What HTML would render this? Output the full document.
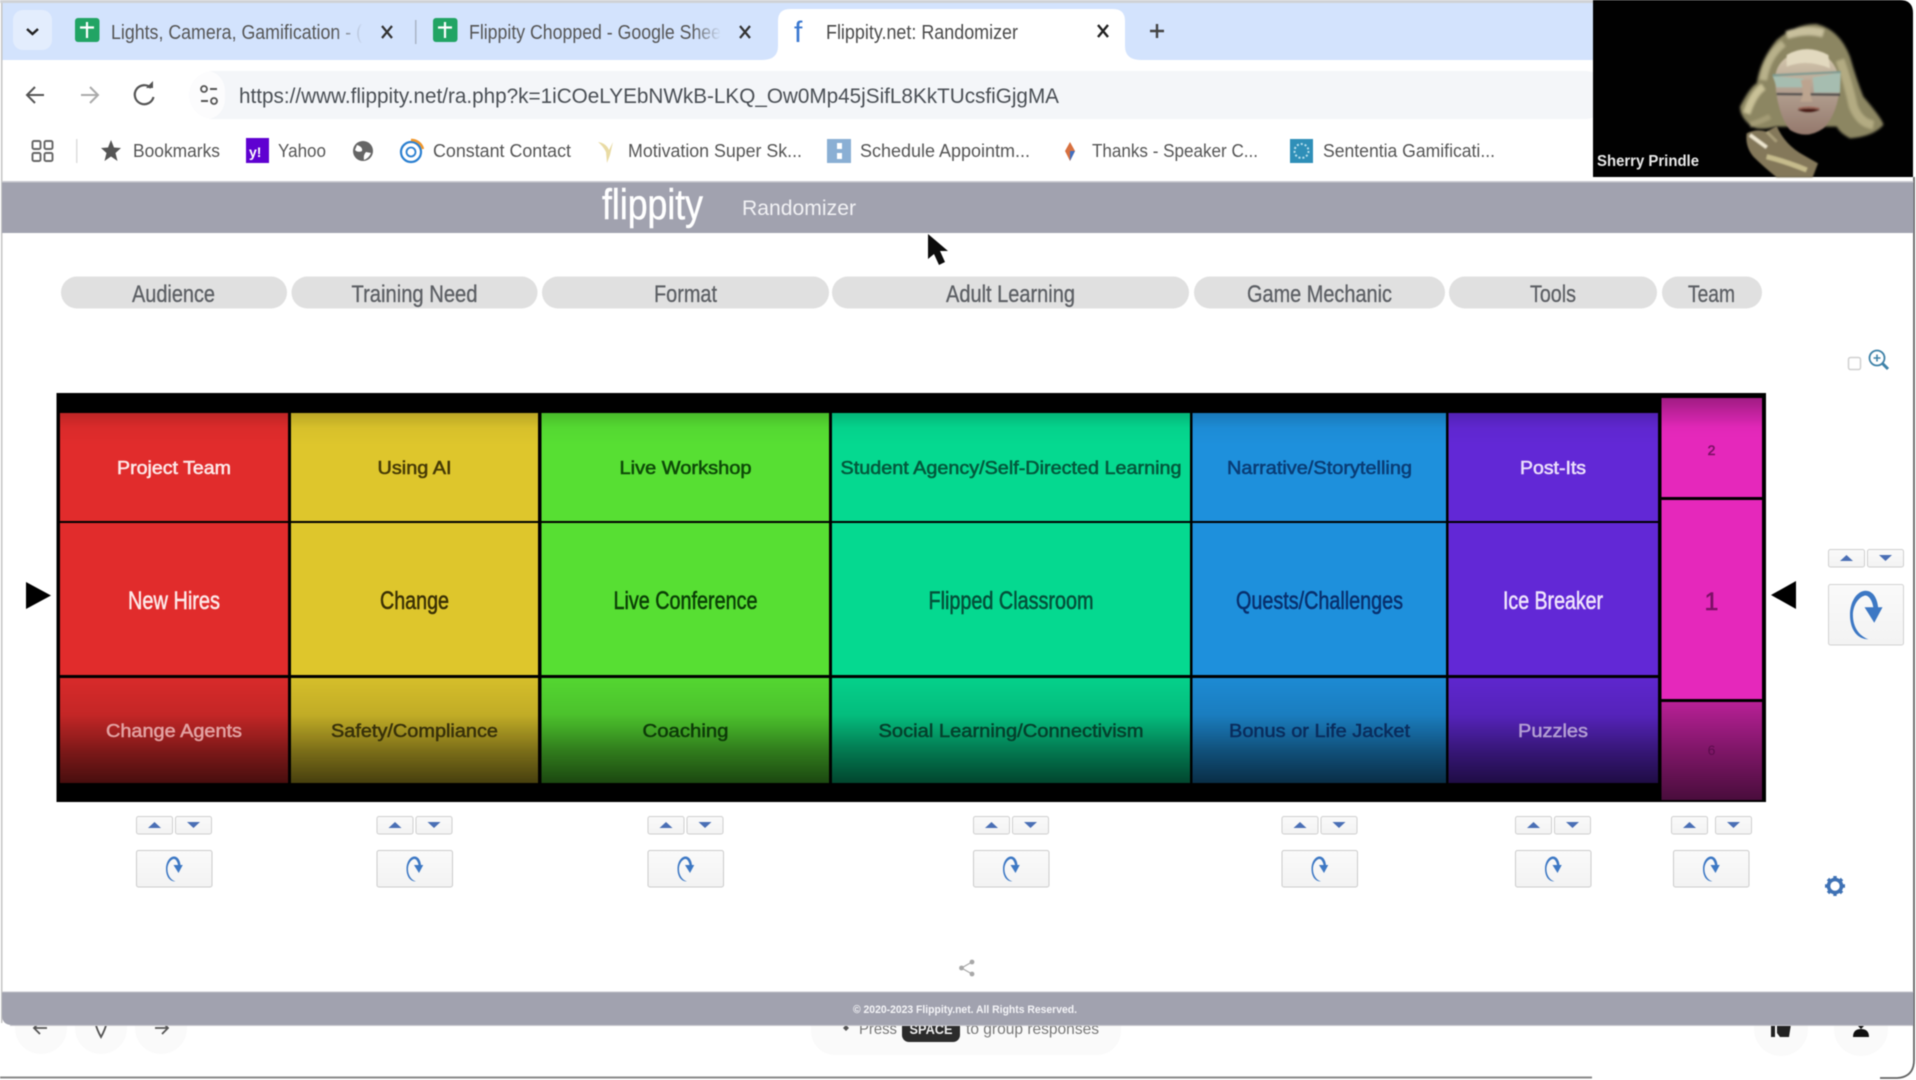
<!DOCTYPE html>
<html><head><meta charset="utf-8"><title>Flippity.net: Randomizer</title>
<style>
html,body{margin:0;padding:0;width:1916px;height:1080px;overflow:hidden;background:#fff}
svg{display:block;filter:blur(.6px)}
text{font-family:"Liberation Sans",sans-serif}
</style></head><body>
<svg xmlns="http://www.w3.org/2000/svg" width="1916" height="1080" viewBox="0 0 1916 1080">
<defs>
<linearGradient id="r1" x1="0" y1="0" x2="0" y2="1"><stop offset="0" stop-color="#000" stop-opacity=".16"/><stop offset=".14" stop-color="#000" stop-opacity=".03"/><stop offset=".3" stop-color="#000" stop-opacity="0"/></linearGradient>
<linearGradient id="r3" x1="0" y1="0" x2="0" y2="1"><stop offset="0" stop-color="#000" stop-opacity=".04"/><stop offset=".35" stop-color="#000" stop-opacity=".13"/><stop offset=".7" stop-color="#000" stop-opacity=".45"/><stop offset="1" stop-color="#000" stop-opacity=".68"/></linearGradient>
<linearGradient id="p1" x1="0" y1="0" x2="0" y2="1"><stop offset="0" stop-color="#000" stop-opacity=".3"/><stop offset=".3" stop-color="#000" stop-opacity=".02"/><stop offset=".4" stop-color="#000" stop-opacity="0"/></linearGradient>
<linearGradient id="p3" x1="0" y1="0" x2="0" y2="1"><stop offset="0" stop-color="#000" stop-opacity=".2"/><stop offset=".5" stop-color="#000" stop-opacity=".45"/><stop offset="1" stop-color="#000" stop-opacity=".68"/></linearGradient>
<linearGradient id="fd" x1="0" y1="0" x2="1" y2="0"><stop offset="0" stop-color="#d3e3fd" stop-opacity="0"/><stop offset="1" stop-color="#d3e3fd"/></linearGradient>
<linearGradient id="btn" x1="0" y1="0" x2="0" y2="1"><stop offset="0" stop-color="#fafafa"/><stop offset="1" stop-color="#f3f3f3"/></linearGradient>
<linearGradient id="face" x1="0" y1="0" x2="0" y2="1"><stop offset="0" stop-color="#d8ccb0"/><stop offset=".45" stop-color="#b4a292"/><stop offset="1" stop-color="#94786c"/></linearGradient>
<filter id="b3" x="-20%" y="-20%" width="140%" height="140%"><feGaussianBlur stdDeviation="7"/></filter>
<filter id="b2" x="-20%" y="-20%" width="140%" height="140%"><feGaussianBlur stdDeviation="4"/></filter>
<filter id="b1" x="-20%" y="-20%" width="140%" height="140%"><feGaussianBlur stdDeviation="2.500"/></filter>
<symbol id="spin" viewBox="0 0 34 50" overflow="visible">
<path fill="#3d78c4" d="M19 50C6 50 0 38 0 25C0 10 8 0 16 0C24 0 28 8 29 17L33.500 17L25 33L15 17L24 17C23 10 19 4 15 5C8 7 3 16 3 25C3 38 10 47 19 50Z"/>
</symbol>
<g id="ud">
<rect x=".5" y=".5" width="36" height="17.500" rx="2" fill="url(#btn)" stroke="#cfcfcf"/>
<path d="M12 12L18.500 6L25 12Z" fill="#4a6fb5"/>
<rect x="39.500" y=".5" width="36" height="17.500" rx="2" fill="url(#btn)" stroke="#cfcfcf"/>
<path d="M51 6L64 6L57.500 12Z" fill="#4a6fb5"/>
</g>
<g id="sp">
<rect x=".5" y=".5" width="75.500" height="36.500" rx="2" fill="url(#btn)" stroke="#cbcbcb"/>
<use href="#spin" x="30" y="6.500" width="17" height="25"/>
</g>
</defs>

<rect width="1916" height="1080" fill="#fff"/>

<!-- tab strip -->
<rect x="2" y="0" width="1600" height="60" fill="#d3e3fd"/>
<rect x="0" y="0" width="1600" height="3" fill="#cfd2d6"/>
<rect x="13" y="10" width="39" height="40" rx="10" fill="#e3edfd"/>
<path d="M27 29L32.500 34L38 29" fill="none" stroke="#222" stroke-width="2.400"/>
<!-- tab 1 -->
<rect x="75" y="18" width="24.500" height="24" rx="3" fill="#21a464"/>
<path d="M87 22V38M80 27.500H94" stroke="#fff" stroke-width="2.200"/>
<text x="111" y="39" font-size="20" fill="#555" textLength="251" lengthAdjust="spacingAndGlyphs">Lights, Camera, Gamification - (</text>
<rect x="335" y="15" width="28" height="32" fill="url(#fd)"/>
<path d="M382 26L392 38M392 26L382 38" stroke="#333" stroke-width="2.200"/>
<rect x="415" y="20" width="1.500" height="24" fill="#a9b4c6"/>
<!-- tab 2 -->
<rect x="433" y="18" width="24.500" height="24" rx="3" fill="#21a464"/>
<path d="M445 22V38M438 27.500H452" stroke="#fff" stroke-width="2.200"/>
<text x="469" y="39" font-size="20" fill="#555" textLength="252" lengthAdjust="spacingAndGlyphs">Flippity Chopped - Google Shee</text>
<rect x="693" y="15" width="28" height="32" fill="url(#fd)"/>
<path d="M740 26L750 38M750 26L740 38" stroke="#333" stroke-width="2.200"/>
<!-- active tab -->
<path d="M762 60Q778 60 778 46V21Q778 9 790 9H1113Q1125 9 1125 21V46Q1125 60 1141 60Z" fill="#fff"/>
<text x="794" y="42" font-size="30" fill="#3a78d0">f</text>
<text x="826" y="39" font-size="20" fill="#4a4a4a" textLength="192" lengthAdjust="spacingAndGlyphs">Flippity.net: Randomizer</text>
<path d="M1098 25L1108 37M1108 25L1098 37" stroke="#222" stroke-width="2.400"/>
<path d="M1157 24V38M1150 31H1164" stroke="#444" stroke-width="2.400"/>

<!-- toolbar -->
<rect x="2" y="60" width="1600" height="122" fill="#fff"/>
<rect x="189" y="71" width="1420" height="48" rx="24" fill="#f4f6f9"/>
<rect x="189" y="71" width="36" height="48" rx="20" fill="#fff" opacity=".7"/>
<path d="M44 95H28M35 87L27 95L35 103" fill="none" stroke="#555" stroke-width="2"/>
<path d="M81 95H97M90 87L98 95L90 103" fill="none" stroke="#aaa" stroke-width="2"/>
<path d="M151 88A9.500 9.500 0 1 0 153.500 97" fill="none" stroke="#555" stroke-width="2.200"/>
<path d="M146 88H153V81Z" fill="#555"/>
<circle cx="204" cy="89" r="3" fill="none" stroke="#555" stroke-width="1.800"/><path d="M210 89H217M201 101H208" stroke="#555" stroke-width="2"/><circle cx="214" cy="101" r="3" fill="none" stroke="#555" stroke-width="1.800"/>
<text x="239" y="103" font-size="21" fill="#4a4f55" textLength="820" lengthAdjust="spacingAndGlyphs">https://www.flippity.net/ra.php?k=1iCOeLYEbNWkB-LKQ_Ow0Mp45jSifL8KkTUcsfiGjgMA</text>

<!-- bookmarks -->
<g fill="none" stroke="#666" stroke-width="1.900"><rect x="32.500" y="141" width="8" height="8" rx="1.500"/><rect x="44.500" y="141" width="8" height="8" rx="1.500"/><rect x="32.500" y="153" width="8" height="8" rx="1.500"/><rect x="44.500" y="153" width="8" height="8" rx="1.500"/></g>
<rect x="76" y="139" width="1.500" height="24" fill="#ddd"/>
<path d="M111 140L114 147.500L121 148L115.500 153L117.500 161L111 156.500L104.500 161L106.500 153L101 148L108 147.500Z" fill="#555"/>
<text x="133" y="157" font-size="18" fill="#555" textLength="87" lengthAdjust="spacingAndGlyphs">Bookmarks</text>
<rect x="246" y="138" width="23" height="25" fill="#5f01d1"/>
<text x="249" y="157" font-size="14" font-weight="bold" fill="#fff">y!</text>
<text x="278" y="157" font-size="18" fill="#555" textLength="48" lengthAdjust="spacingAndGlyphs">Yahoo</text>
<circle cx="363" cy="151" r="10" fill="#666"/><path d="M357 145Q363 147 362 151Q358 153 355 150ZM366 152L371 153Q369 158 364 160Q363 155 366 152Z" fill="#fff"/>
<circle cx="411" cy="152" r="10" fill="none" stroke="#2a7fd0" stroke-width="2.200"/><circle cx="411" cy="152" r="4.500" fill="none" stroke="#2a7fd0" stroke-width="1.800"/><path d="M411 140A12 12 0 0 1 423 149" fill="none" stroke="#f0962a" stroke-width="2.400"/>
<text x="433" y="157" font-size="18" fill="#555" textLength="138" lengthAdjust="spacingAndGlyphs">Constant Contact</text>
<path d="M598 142Q606 143 609 150L613 142L610 155L607 163L606 152Q603 146 598 142Z" fill="#e9dba4"/>
<text x="628" y="157" font-size="18" fill="#555" textLength="174" lengthAdjust="spacingAndGlyphs">Motivation Super Sk...</text>
<rect x="827" y="139" width="24" height="24" fill="#8aafd4"/><rect x="837" y="143" width="5" height="6" fill="#fff"/><rect x="837" y="153" width="5" height="6" fill="#fff"/>
<text x="860" y="157" font-size="18" fill="#555" textLength="170" lengthAdjust="spacingAndGlyphs">Schedule Appointm...</text>
<path d="M1070 142L1075 151L1070 161L1065 151Z" fill="#d8703f"/><path d="M1070 151L1075 151L1070 161Z" fill="#3f6fc2"/>
<text x="1092" y="157" font-size="18" fill="#555" textLength="166" lengthAdjust="spacingAndGlyphs">Thanks - Speaker C...</text>
<rect x="1290" y="139" width="23" height="24" fill="#2f8fb8"/><circle cx="1301.500" cy="151" r="7" fill="none" stroke="#b8e0ee" stroke-width="2" stroke-dasharray="2 2"/>
<text x="1323" y="157" font-size="18" fill="#555" textLength="172" lengthAdjust="spacingAndGlyphs">Sententia Gamificati...</text>

<!-- video -->
<path d="M1593 0H1900Q1913 0 1913 13V177H1593Z" fill="#010101"/>
<g transform="translate(1590 0) scale(.33333)">
<g filter="url(#b2)">
<path d="M450 320Q480 260 500 250Q510 180 560 120Q620 70 680 72Q750 90 780 170Q800 240 820 290Q880 360 880 375Q850 410 780 415Q750 400 740 380L560 380Q500 395 480 375Q450 350 450 320Z" fill="#8c8662"/>
<path d="M470 340Q490 280 520 260" stroke="#c9c197" stroke-width="22" fill="none"/>
<path d="M520 240Q530 170 580 130" stroke="#b8b18a" stroke-width="22" fill="none"/>
<path d="M590 105Q650 85 700 100" stroke="#c8c09c" stroke-width="24" fill="none"/>
<path d="M750 180Q775 250 790 320Q810 370 850 375" stroke="#b3ab82" stroke-width="26" fill="none"/>
<path d="M480 375Q510 365 540 350" stroke="#a49c76" stroke-width="16" fill="none"/>
</g>
<g filter="url(#b1)">
<path d="M555 235Q560 165 650 150Q740 160 750 250Q745 340 700 385Q650 420 600 390Q560 340 555 235Z" fill="url(#face)"/>
<path d="M590 165Q650 130 715 165L720 205Q650 175 590 200Z" fill="#e2d9bf"/>
<path d="M548 228L640 236L640 262L560 262ZM668 232L752 218L750 278L672 278Z" fill="#a6bdb0"/>
<path d="M548 226L752 216" stroke="#7f9a90" stroke-width="7" fill="none"/>
<path d="M560 282L750 284" stroke="#4a4a48" stroke-width="7" fill="none"/>
<path d="M632 240Q645 285 630 305L668 305Q656 280 664 240Z" fill="#bca48f"/>
<path d="M622 330Q655 320 690 330Q655 345 622 330Z" fill="#4c1e18"/>
<path d="M625 326Q655 318 688 326" stroke="#9a5a4c" stroke-width="4" fill="none"/>
</g>
<g filter="url(#b1)">
<path d="M470 400Q500 385 530 395L560 378Q585 435 640 465L684 490L668 532L560 532Q520 500 490 470Q465 440 470 400Z" fill="#84785a"/>
<path d="M480 405L530 442" stroke="#eee6cf" stroke-width="11"/>
<path d="M530 470Q590 485 650 510" stroke="#c6bb8c" stroke-width="15" fill="none"/>
<path d="M530 395L560 425" stroke="#a89c78" stroke-width="9"/>
</g>
</g>
<text x="1597" y="166" font-size="16" font-weight="bold" fill="#e8e8e8" textLength="102" lengthAdjust="spacingAndGlyphs">Sherry Prindle</text>

<!-- page edges -->
<rect x="1" y="3" width="1.500" height="1020" fill="#c4c4c4"/>
<path d="M1914 177V1060Q1914 1077 1897 1078H1880" fill="none" stroke="#666" stroke-width="1.800"/>
<rect x="0" y="1076.500" width="1592" height="2" fill="#8a8a8a"/>

<!-- header -->
<rect x="2" y="182" width="1911.500" height="51" fill="#a1a2af"/>
<rect x="2" y="181" width="1911.500" height="1.500" fill="#c9c9cf"/>
<text x="602" y="219" font-size="43" fill="#fff" stroke="#fff" stroke-width=".5" textLength="101" lengthAdjust="spacingAndGlyphs">flippity</text>
<text x="742" y="215" font-size="21" fill="#f1f1f4" textLength="114" lengthAdjust="spacingAndGlyphs">Randomizer</text>

<!-- pills -->
<g fill="#e0e0e0">
<rect x="61" y="276.500" width="226" height="32" rx="16"/>
<rect x="291.500" y="276.500" width="246" height="32" rx="16"/>
<rect x="542" y="276.500" width="287" height="32" rx="16"/>
<rect x="832" y="276.500" width="357" height="32" rx="16"/>
<rect x="1194" y="276.500" width="251" height="32" rx="16"/>
<rect x="1449" y="276.500" width="208" height="32" rx="16"/>
<rect x="1662" y="276.500" width="100" height="32" rx="16"/>
</g>
<g font-size="24" fill="#5c5f64" stroke="#5c5f64" stroke-width=".3" text-anchor="middle">
<text x="173.500" y="302" textLength="83" lengthAdjust="spacingAndGlyphs">Audience</text>
<text x="414.500" y="302" textLength="126" lengthAdjust="spacingAndGlyphs">Training Need</text>
<text x="685.500" y="302" textLength="63" lengthAdjust="spacingAndGlyphs">Format</text>
<text x="1010.500" y="302" textLength="129" lengthAdjust="spacingAndGlyphs">Adult Learning</text>
<text x="1319.500" y="302" textLength="145" lengthAdjust="spacingAndGlyphs">Game Mechanic</text>
<text x="1553" y="302" textLength="46" lengthAdjust="spacingAndGlyphs">Tools</text>
<text x="1711.500" y="302" textLength="47" lengthAdjust="spacingAndGlyphs">Team</text>
</g>

<!-- checkbox + zoom -->
<rect x="1848.500" y="357.500" width="12" height="12" rx="2" fill="#fff" stroke="#d0d0d0" stroke-width="1.500"/>
<circle cx="1877" cy="358" r="7.500" fill="#fff" stroke="#3f82a8" stroke-width="1.800"/>
<path d="M1882.500 363.500L1888 369" stroke="#3f82a8" stroke-width="3"/>
<path d="M1873.500 358H1880.500M1877 354.500V361.500" stroke="#3f82a8" stroke-width="1.600"/>

<!-- machine -->
<rect x="56.500" y="393" width="1709.500" height="409" fill="#000"/>
<g>
<rect x="60" y="413" width="228" height="108" fill="#e12c2c"/>
<rect x="291" y="413" width="247" height="108" fill="#dec62c"/>
<rect x="541.500" y="413" width="287.500" height="108" fill="#57df33"/>
<rect x="832" y="413" width="358" height="108" fill="#05d990"/>
<rect x="1192.500" y="413" width="253.500" height="108" fill="#1e90dc"/>
<rect x="1448.500" y="413" width="209.500" height="108" fill="#6228d6"/>
<rect x="60" y="413" width="1598" height="108" fill="url(#r1)"/>
<rect x="60" y="523" width="228" height="152" fill="#e12c2c"/>
<rect x="291" y="523" width="247" height="152" fill="#dec62c"/>
<rect x="541.500" y="523" width="287.500" height="152" fill="#57df33"/>
<rect x="832" y="523" width="358" height="152" fill="#05d990"/>
<rect x="1192.500" y="523" width="253.500" height="152" fill="#1e90dc"/>
<rect x="1448.500" y="523" width="209.500" height="152" fill="#6228d6"/>
<rect x="60" y="678" width="228" height="105" fill="#e12c2c"/>
<rect x="291" y="678" width="247" height="105" fill="#dec62c"/>
<rect x="541.500" y="678" width="287.500" height="105" fill="#57df33"/>
<rect x="832" y="678" width="358" height="105" fill="#05d990"/>
<rect x="1192.500" y="678" width="253.500" height="105" fill="#1e90dc"/>
<rect x="1448.500" y="678" width="209.500" height="105" fill="#6228d6"/>
<rect x="60" y="678" width="1598" height="105" fill="url(#r3)"/>
<rect x="1661.500" y="398" width="100.500" height="99" fill="#e528bb"/>
<rect x="1661.500" y="398" width="100.500" height="99" fill="url(#p1)"/>
<rect x="1661.500" y="500" width="100.500" height="199" fill="#e528bb"/>
<rect x="1661.500" y="702" width="100.500" height="98" fill="#e528bb"/>
<rect x="1661.500" y="702" width="100.500" height="98" fill="url(#p3)"/>
</g>

<!-- row 1 labels -->
<g font-size="18" text-anchor="middle" stroke-width=".55">
<text x="174" y="474" fill="#fde8e8" stroke="#fde8e8" textLength="114" lengthAdjust="spacingAndGlyphs">Project Team</text>
<text x="414.500" y="474" fill="#463a06" stroke="#463a06" textLength="74" lengthAdjust="spacingAndGlyphs">Using AI</text>
<text x="685.500" y="474" fill="#0e4a08" stroke="#0e4a08" textLength="132" lengthAdjust="spacingAndGlyphs">Live Workshop</text>
<text x="1011" y="474" fill="#04583c" stroke="#04583c" textLength="341" lengthAdjust="spacingAndGlyphs">Student Agency/Self-Directed Learning</text>
<text x="1319.500" y="474" fill="#0a3d76" stroke="#0a3d76" textLength="185" lengthAdjust="spacingAndGlyphs">Narrative/Storytelling</text>
<text x="1553" y="474" fill="#ece0fb" stroke="#ece0fb" textLength="66" lengthAdjust="spacingAndGlyphs">Post-Its</text>
<text x="1711.500" y="455" fill="#7c1066" stroke="#7c1066" font-size="14">2</text>
</g>
<!-- row 2 labels -->
<g font-size="25" text-anchor="middle" stroke-width=".55">
<text x="174" y="609" fill="#fde8e8" stroke="#fde8e8" textLength="92" lengthAdjust="spacingAndGlyphs">New Hires</text>
<text x="414.500" y="609" fill="#3a3005" stroke="#3a3005" textLength="69" lengthAdjust="spacingAndGlyphs">Change</text>
<text x="685.500" y="609" fill="#0b3f06" stroke="#0b3f06" textLength="144" lengthAdjust="spacingAndGlyphs">Live Conference</text>
<text x="1011" y="609" fill="#04503a" stroke="#04503a" textLength="165" lengthAdjust="spacingAndGlyphs">Flipped Classroom</text>
<text x="1319.500" y="609" fill="#08306e" stroke="#08306e" textLength="167" lengthAdjust="spacingAndGlyphs">Quests/Challenges</text>
<text x="1553" y="609" fill="#efe4fc" stroke="#efe4fc" textLength="100" lengthAdjust="spacingAndGlyphs">Ice Breaker</text>
<text x="1711.500" y="610" fill="#7c1066" stroke="#7c1066">1</text>
</g>
<!-- row 3 labels -->
<g font-size="18" text-anchor="middle" stroke-width=".5">
<text x="174" y="737" fill="#e3a2a2" stroke="#e3a2a2" textLength="136" lengthAdjust="spacingAndGlyphs">Change Agents</text>
<text x="414.500" y="737" fill="#37300a" stroke="#37300a" textLength="167" lengthAdjust="spacingAndGlyphs">Safety/Compliance</text>
<text x="685.500" y="737" fill="#0d3a08" stroke="#0d3a08" textLength="86" lengthAdjust="spacingAndGlyphs">Coaching</text>
<text x="1011" y="737" fill="#05402c" stroke="#05402c" textLength="265" lengthAdjust="spacingAndGlyphs">Social Learning/Connectivism</text>
<text x="1319.500" y="737" fill="#0a2c5c" stroke="#0a2c5c" textLength="181" lengthAdjust="spacingAndGlyphs">Bonus or Life Jacket</text>
<text x="1553" y="737" fill="#b49fd4" stroke="#b49fd4" textLength="70" lengthAdjust="spacingAndGlyphs">Puzzles</text>
<text x="1711.500" y="755" fill="#5c0c4c" font-size="14">6</text>
</g>

<!-- arrows -->
<path d="M26 582L51 595.500L26 609Z" fill="#000"/>
<path d="M1796 581V609L1771 595Z" fill="#000"/>

<!-- big controls -->
<use href="#ud" x="1828" y="549"/>
<rect x="1828.500" y="584.500" width="75" height="60.500" rx="2" fill="url(#btn)" stroke="#d2d2d2"/>
<use href="#spin" x="1850" y="590" width="33" height="50"/>

<!-- small controls -->
<use href="#ud" x="136" y="816"/><use href="#sp" x="136" y="850"/>
<use href="#ud" x="376.500" y="816"/><use href="#sp" x="376.500" y="850"/>
<use href="#ud" x="647.500" y="816"/><use href="#sp" x="647.500" y="850"/>
<use href="#ud" x="973" y="816"/><use href="#sp" x="973" y="850"/>
<use href="#ud" x="1281.500" y="816"/><use href="#sp" x="1281.500" y="850"/>
<use href="#ud" x="1515" y="816"/><use href="#sp" x="1515" y="850"/>
<rect x="1671.500" y="816.500" width="36" height="17.500" rx="2" fill="url(#btn)" stroke="#cfcfcf"/><path d="M1683 828L1689.500 822L1696 828Z" fill="#4a6fb5"/>
<rect x="1715.500" y="816.500" width="36" height="17.500" rx="2" fill="url(#btn)" stroke="#cfcfcf"/><path d="M1727 822H1740L1733.500 828Z" fill="#4a6fb5"/>
<use href="#sp" x="1673" y="850"/>

<!-- gear -->
<circle cx="1835" cy="886" r="6.500" fill="none" stroke="#3f72b5" stroke-width="3.600"/>
<g stroke="#3f72b5" stroke-width="3.400"><path d="M1835 876V880M1835 892V896M1825 886H1829M1841 886H1845M1828 879L1831 882M1839 890L1842 893M1842 879L1839 882M1831 890L1828 893"/></g>

<!-- share -->
<g fill="#a8a8a8"><circle cx="961.500" cy="968" r="2.400"/><circle cx="972" cy="962" r="2.400"/><circle cx="972" cy="974" r="2.400"/></g>
<path d="M972 962L961.500 968L972 974" stroke="#a8a8a8" stroke-width="1.200" fill="none"/>

<!-- under-footer ghost controls -->
<g fill="#fafafa">
<circle cx="41" cy="1028" r="26"/><circle cx="101" cy="1028" r="26"/><circle cx="161" cy="1028" r="26"/>
<rect x="811" y="1000" width="310" height="55" rx="24"/>
<circle cx="1781" cy="1029" r="27"/><circle cx="1861" cy="1029" r="27"/>
</g>
<path d="M47 1028H35M40 1022L34 1028L40 1034" fill="none" stroke="#555" stroke-width="1.800"/>
<path d="M95 1022Q97 1030 101 1037Q105 1030 107 1022" fill="none" stroke="#555" stroke-width="1.800"/>
<path d="M155 1028H167M162 1022L168 1028L162 1034" fill="none" stroke="#555" stroke-width="1.800"/>
<path d="M846 1025L849 1028L846 1031L843 1028Z" fill="#555"/>
<text x="859" y="1034" font-size="16" fill="#777" textLength="38" lengthAdjust="spacingAndGlyphs">Press</text>
<rect x="902" y="1015" width="58" height="27" rx="7" fill="#2b2b2b"/>
<text x="931" y="1034" font-size="14" font-weight="bold" fill="#eee" text-anchor="middle" textLength="43" lengthAdjust="spacingAndGlyphs">SPACE</text>
<text x="966" y="1034" font-size="16" fill="#777" textLength="133" lengthAdjust="spacingAndGlyphs">to group responses</text>
<path d="M1771 1024H1775V1037H1771ZM1777 1024H1791L1789 1037H1780L1777 1033Z" fill="#222"/>
<path d="M1853 1037Q1853 1029 1861 1029Q1869 1029 1869 1037ZM1857 1025H1865L1861 1029Z" fill="#111"/>

<!-- footer -->
<path d="M2 992H1913.500V1025H12Q2 1025 2 1015Z" fill="#a1a2af"/>
<rect x="2" y="991.500" width="1911.500" height="1" fill="#c4c4cc"/>
<rect x="10" y="1025" width="1903" height="1" fill="#c8c8ce"/>
<text x="853" y="1013" font-size="11" font-weight="bold" fill="#f4f4f7" textLength="224" lengthAdjust="spacingAndGlyphs">© 2020-2023 Flippity.net. All Rights Reserved.</text>

<!-- cursor -->
<path d="M928 234L928 259L934 254L939 265L945 262L940 251L948 251Z" fill="#0c0c0c"/>
</svg>
</body></html>
